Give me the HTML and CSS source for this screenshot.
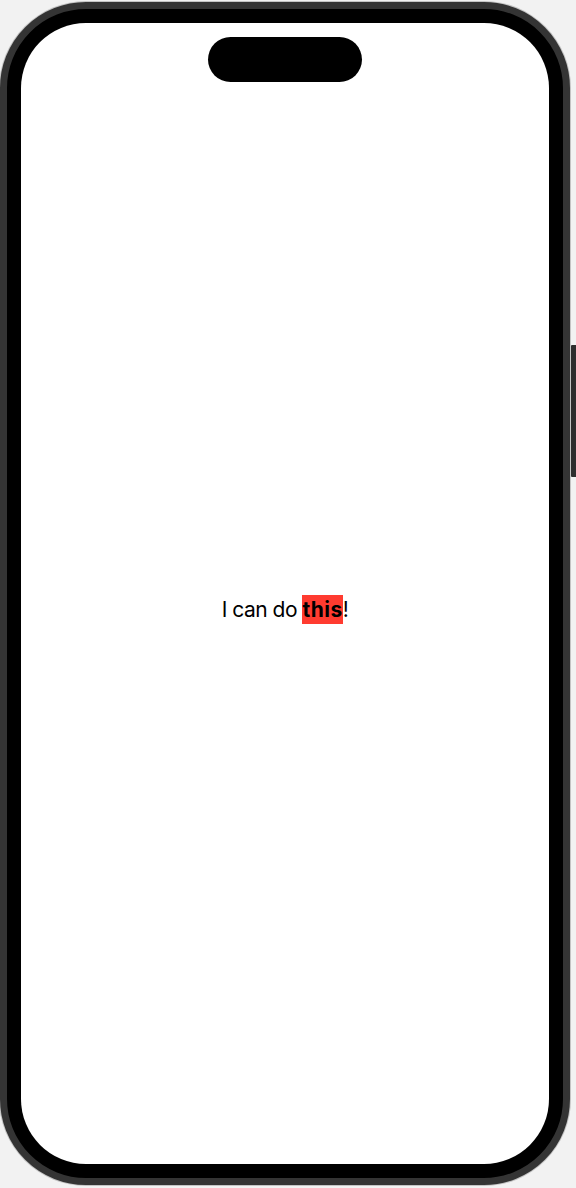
FILE: index.html
```html
<!DOCTYPE html>
<html lang="en">
<head>
<meta charset="utf-8">
<title>I can do this</title>
<link rel="stylesheet" href="styles.css">
</head>
<body>
  <div class="device">
    <div class="phone">
      <div class="screen">
        <div class="island"></div>
        <div class="safe-area">
          <p class="message">I can do <span class="highlight">this</span>!</p>
        </div>
      </div>
    </div>
    <div class="side-button"></div>
  </div>
</body>
</html>
```
FILE: styles.css
```css
html, body {
  margin: 0;
  padding: 0;
  background: #f2f2f2;
}

.device {
  position: relative;
  width: 576px;
  height: 1188px;
  padding-top: 2px;
  box-sizing: border-box;
}

.phone {
  width: 570px;
  height: 1183px;
  box-sizing: border-box;
  border: 7px solid #343434;
  border-radius: 86px;
  background: #000;
  padding: 14px;
  box-shadow: 0 0 0 1px #c4c4c4;
}

.screen {
  position: relative;
  height: 100%;
  background: #fff;
  border-radius: 65px;
  overflow: hidden;
  display: flex;
  flex-direction: column;
}

.island {
  position: absolute;
  top: 14px;
  left: 50%;
  width: 154px;
  height: 45px;
  margin-left: -77px;
  border-radius: 23px;
  background: #000;
}

.safe-area {
  flex: 1;
  display: flex;
  align-items: center;
  justify-content: center;
  padding: 74px 0 42px;
}

.message {
  margin: 0;
  font-family: Inter, "Noto Sans", sans-serif;
  font-size: 21px;
  line-height: 29px;
  color: #000;
  letter-spacing: -0.5px;
}

.highlight {
  display: inline-block;
  background: #ff3b30;
  font-weight: 700;
  letter-spacing: 0.5px;
  line-height: 29px;
  height: 29px;
}

.side-button {
  position: absolute;
  left: 571px;
  top: 345px;
  width: 5px;
  height: 132px;
  background: #2e2e2e;
  border-radius: 1px 0 0 1px;
}
```
